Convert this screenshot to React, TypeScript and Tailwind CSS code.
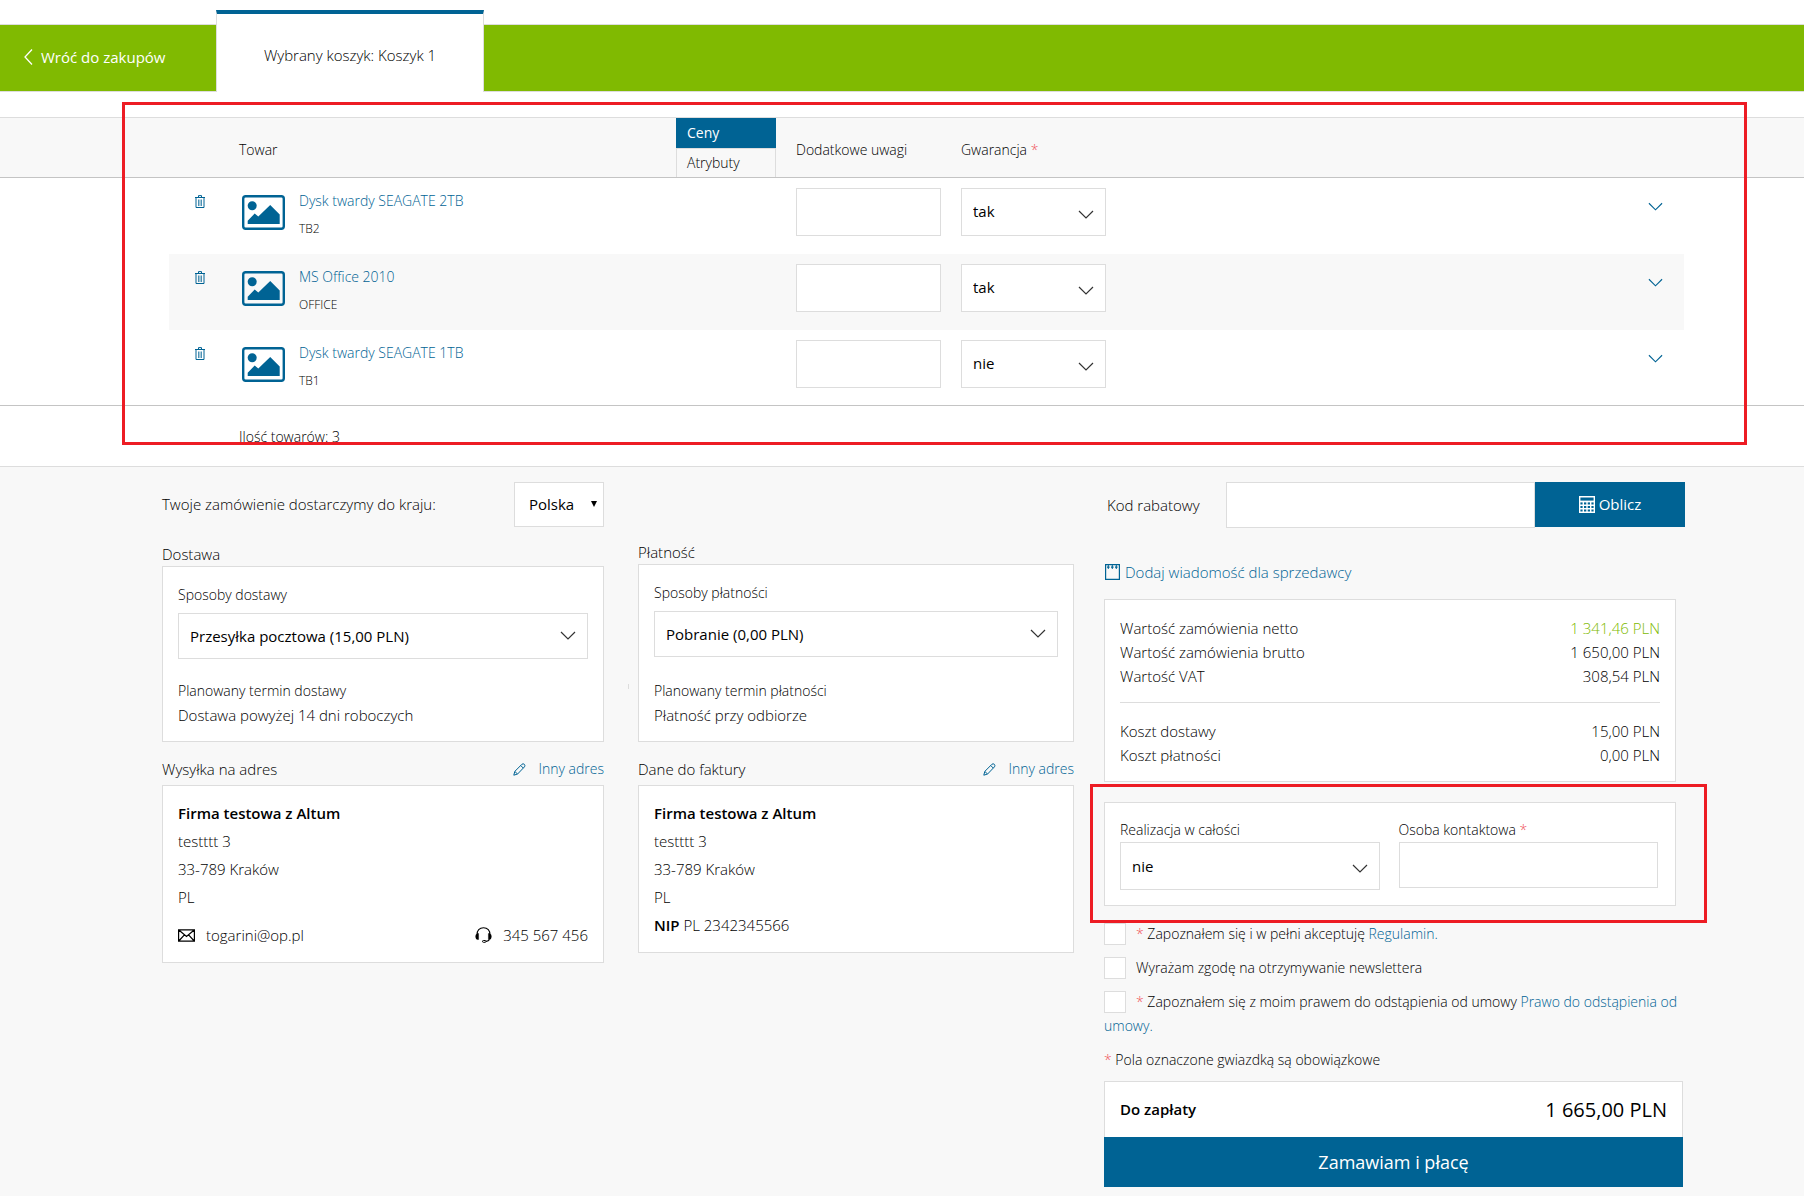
import React from "react";

type Product = {
  name: string;
  code: string;
  warranty: string;
};

const products: Product[] = [
  { name: "Dysk twardy SEAGATE 2TB", code: "TB2", warranty: "tak" },
  { name: "MS Office 2010", code: "OFFICE", warranty: "tak" },
  { name: "Dysk twardy SEAGATE 1TB", code: "TB1", warranty: "nie" },
];

function ChevronDown({ className }: { className?: string }) {
  return (
    <svg viewBox="0 0 16 10" className={className} fill="none" stroke="currentColor" strokeWidth="1.2" aria-hidden="true">
      <path d="M1 1l7 7 7-7" />
    </svg>
  );
}

function TrashIcon() {
  return (
    <svg width="10" height="13" viewBox="0 0 10 13" fill="none" stroke="currentColor" aria-hidden="true">
      <path d="M0 2.5h10M3.500 2V.6h3V2M1 2.500v10h8v-10" strokeWidth="1" />
      <path d="M3.500 4.500v6.500M5 4.500v6.500M6.500 4.500v6.500" strokeWidth="0.7" />
    </svg>
  );
}

function PictureIcon() {
  return (
    <svg width="43" height="35" viewBox="0 0 43 35" aria-hidden="true">
      <rect x="1.2" y="1.2" width="40.6" height="32.6" rx="2.5" fill="none" stroke="currentColor" strokeWidth="2.4" />
      <circle cx="10.2" cy="10.8" r="4.5" fill="currentColor" />
      <path d="M5.7 29v-3.2l7-7.4 3.6 3L28.2 10l9.5 9.6V29z" fill="currentColor" />
    </svg>
  );
}

function PencilIcon() {
  return (
    <svg width="13" height="13" viewBox="0 0 13 13" fill="none" stroke="currentColor" aria-hidden="true">
      <path d="M.8 12.2l1-3.800L8.900 1.300q1.300-1.100 2.400 0t.2 2.500L4.600 11zM7.800 2.600l2.500 2.500M2 8.600l2.400 2.300" />
    </svg>
  );
}

function MailIcon() {
  return (
    <svg width="17" height="13" viewBox="0 0 17 13" fill="none" stroke="currentColor" strokeWidth="1.2" aria-hidden="true">
      <path d="M.6.8h15.8v11.4H.6zM.8 1l7.7 6.4L16.2 1M.8 12l5.6-6.2M16.2 12l-5.6-6.2" />
    </svg>
  );
}

function HeadsetIcon() {
  return (
    <svg width="17" height="16" viewBox="0 0 17 16" fill="none" stroke="currentColor" aria-hidden="true">
      <path d="M2.2 7.5C1.8 3.5 4.5.7 8.5.7s6.700 2.800 6.300 6.800M14.500 12.500q-.8 1.700-3.500 1.900" strokeWidth="1.100" />
      <path d="M3.600 6.500v6H2.300Q.6 12 .6 9.500t1.700-3zM13.400 6.500v6h1.300q1.700-.5 1.700-3t-1.700-3z" fill="currentColor" strokeWidth="0.400" />
      <rect x="7.500" y="13.500" width="3.500" height="1.800" rx="0.900" />
    </svg>
  );
}

function CalculatorIcon() {
  return (
    <svg width="16" height="17" viewBox="0 0 16 17" fill="none" stroke="currentColor" aria-hidden="true">
      <path d="M.7.7h14.600v15.600H.7z" strokeWidth="1.400" />
      <path d="M.7 5.500h14.600" strokeWidth="1.800" />
      <path d="M1 9.300h14M1 12.800h14M4.300 6v10M8 6v10M11.700 6v10" strokeWidth="1.400" />
    </svg>
  );
}

function NoteIcon() {
  return (
    <svg width="15" height="16" viewBox="0 0 15 16" fill="none" stroke="currentColor" aria-hidden="true">
      <path d="M.6.600h13.800v14.800H.6z" strokeWidth="1.200" />
      <path d="M2 3.200h11" strokeWidth="1.200" strokeDasharray="2.600 1.400" />
      <path d="M3.300 1v4M7.300 1v4M11.300 1v4" strokeWidth="1" />
    </svg>
  );
}

type SelectBoxProps = {
  id: string;
  label?: string;
  options: string[];
  size?: "md" | "lg";
};

function SelectBox({ id, label, options, size = "md" }: SelectBoxProps) {
  return (
    <div className="relative">
      <select
        id={id}
        aria-label={label}
        className={`${size === "lg" ? "h-12" : "h-[46px]"} w-full appearance-none border border-[#ddd] bg-white pl-[11px] pr-10 text-[15px] font-normal text-black`}
      >
        {options.map((option) => (
          <option key={option}>{option}</option>
        ))}
      </select>
      <ChevronDown
        className={`${size === "lg" ? "top-[22px]" : "top-[18px]"} pointer-events-none absolute right-3 h-[10px] w-4 text-[#333]`}
      />
    </div>
  );
}

function Required() {
  return <span className="text-[#f0545a]">*</span>;
}

function SectionHeading({ title }: { title: string }) {
  return (
    <div className="flex h-[30px] items-center justify-between pb-[2px]">
      <h2 className="text-[15px]">{title}</h2>
      <a href="#" className="flex items-center gap-3 text-sm text-[#006394]">
        <PencilIcon />
        Inny adres
      </a>
    </div>
  );
}

function MethodCard(props: { id: string; label: string; option: string; termLabel: string; term: string; className: string }) {
  return (
    <div className={`flex flex-col border border-[#ddd] bg-white px-[15px] pb-[14px] pt-4 ${props.className}`}>
      <label htmlFor={props.id} className="mb-[6px] block text-sm leading-6">
        {props.label}
      </label>
      <SelectBox id={props.id} options={[props.option]} />
      <p className="mt-auto text-sm leading-6">{props.termLabel}</p>
      <p className="text-[15px] leading-6">{props.term}</p>
    </div>
  );
}

function AddressLines() {
  return (
    <>
      <p className="font-semibold">Firma testowa z Altum</p>
      <p>testttt 3</p>
      <p>33-789 Kraków</p>
      <p>PL</p>
    </>
  );
}

function SummaryRow({ label, value, highlight }: { label: string; value: string; highlight?: boolean }) {
  return (
    <div className="flex justify-between">
      <dt>{label}</dt>
      <dd className={highlight ? "text-[#80ba01]" : ""}>{value}</dd>
    </div>
  );
}

function Consent({ id, children }: { id: string; children: React.ReactNode }) {
  return (
    <div className="mb-[10px] leading-6">
      <input
        id={id}
        type="checkbox"
        className="my-px mr-[10px] h-[22px] w-[22px] appearance-none border border-[#ddd] bg-white align-top checked:bg-[#006394]"
      />
      <label htmlFor={id}>{children}</label>
    </div>
  );
}

export default function App() {
  return (
    <div className="bg-white font-['Open_Sans','Noto_Sans',sans-serif] font-[350] text-black">
      <header className="pt-[10px]">
        <nav className="flex h-[82px] items-end">
          <a
            href="#"
            className="flex h-[68px] w-[216px] items-center gap-2 border-y border-[#ddd] bg-[#80ba01] pb-[2px] pl-6 text-[15px] font-normal text-white"
          >
            <svg width="9" height="18" viewBox="0 0 9 18" fill="none" stroke="currentColor" strokeWidth="1.3" aria-hidden="true">
              <path d="M8 1.500L1 9l7 7.500" />
            </svg>
            Wróć do zakupów
          </a>
          <a
            href="#"
            className="flex h-[82px] w-[268px] items-center justify-center border-x border-t-4 border-x-[#ddd] border-t-[#006394] bg-white pt-1 text-[15px]"
          >
            Wybrany koszyk: Koszyk 1
          </a>
          <div className="h-[68px] flex-1 border-y border-[#ddd] bg-[#80ba01]" />
        </nav>
      </header>

      <section className="relative pb-[24px] pt-[25px]">
        <table className="w-full table-fixed border-collapse text-left text-sm">
          <colgroup>
            <col className="w-[169px]" />
            <col className="w-[70px]" />
            <col className="w-[437px]" />
            <col className="w-[120px]" />
            <col className="w-[165px]" />
            <col className="w-[145px]" />
            <col />
            <col className="w-[120px]" />
          </colgroup>
          <thead>
            <tr className="h-[60px] border-b border-t border-b-[#c4c4c4] border-t-[#ddd] bg-[#f8f8f8]">
              <td />
              <td />
              <th className="pt-1 font-[350]">Towar</th>
              <th className="p-0 align-top font-[350]">
                <div className="w-[100px]">
                  <button type="button" className="block h-[30px] w-full bg-[#006394] pl-[11px] text-left font-normal text-white">
                    Ceny
                  </button>
                  <button type="button" className="block h-[29px] w-full border-x border-t border-[#ddd] pl-[10px] text-left">
                    Atrybuty
                  </button>
                </div>
              </th>
              <th className="pt-1 font-[350]">Dodatkowe uwagi</th>
              <th className="pt-1 font-[350]">
                Gwarancja <Required />
              </th>
              <td />
              <td />
            </tr>
          </thead>
          <tbody className="border-b border-[#c4c4c4]">
            {products.map((product, index) => {
              const shade = index % 2 === 1 ? "bg-[#f8f8f8]" : "";
              return (
                <tr key={product.code} className="h-[76px] align-top">
                  <td />
                  <td className={`pl-[26px] pt-[17px] ${shade}`}>
                    <button type="button" aria-label="Usuń" className="block text-[#006394]">
                      <TrashIcon />
                    </button>
                  </td>
                  <td className={`pl-[3px] ${shade}`}>
                    <div className="flex gap-[14px]">
                      <div className="pt-[17px] text-[#006394]">
                        <PictureIcon />
                      </div>
                      <div className="pt-2">
                        <a href="#" className="block leading-[30px] text-[#006394]">
                          {product.name}
                        </a>
                        <p className="text-xs leading-[26px]">{product.code}</p>
                      </div>
                    </div>
                  </td>
                  <td className={shade} />
                  <td className={`pt-[10px] ${shade}`}>
                    <input
                      type="text"
                      aria-label={`Dodatkowe uwagi ${product.name}`}
                      className="block h-12 w-[145px] border border-[#ddd] bg-white px-3"
                    />
                  </td>
                  <td className={`pt-[10px] ${shade}`}>
                    <SelectBox
                      id={`warranty-${product.code}`}
                      label="Gwarancja"
                      options={[product.warranty, product.warranty === "tak" ? "nie" : "tak"]}
                      size="lg"
                    />
                  </td>
                  <td className={`pr-[21px] pt-[24px] ${shade}`}>
                    <button type="button" aria-label="Rozwiń" className="ml-auto block text-[#006394]">
                      <ChevronDown className="h-[10px] w-[15px]" />
                    </button>
                  </td>
                  <td />
                </tr>
              );
            })}
          </tbody>
        </table>
        <div className="h-9 overflow-hidden pl-[239px] pt-[19px]">
          <p className="text-sm leading-6">Ilość towarów: 3</p>
        </div>
        <div className="pointer-events-none absolute bottom-[21px] left-[122px] right-[57px] top-[10px] border-[3px] border-[#ed1c24]" />
      </section>

      <main className="grid grid-cols-[476fr_466fr_581fr] border-t border-[#ddd] bg-[#f8f8f8] pb-[9px] pl-[162px] pr-[119px] pt-[15px]">
        <div className="relative pr-[34px]">
          <span className="absolute right-[9px] top-[202px] h-[5px] w-px bg-[#ddd]" />
          <div className="flex items-center justify-between">
            <label htmlFor="country" className="text-[15px]">
              Twoje zamówienie dostarczymy do kraju:
            </label>
            <div className="relative">
              <select
                id="country"
                className="block h-[45px] w-[90px] appearance-none border border-[#ddd] bg-white pl-[14px] text-[15px] font-normal"
              >
                <option>Polska</option>
              </select>
              <svg width="6" height="6" viewBox="0 0 6 6" className="pointer-events-none absolute right-[7px] top-[19px]" aria-hidden="true">
                <path d="M0 0h6L3 6z" />
              </svg>
            </div>
          </div>
          <div className="flex h-[39px] items-end">
            <h2 className="text-[15px] leading-6">Dostawa</h2>
          </div>
          <MethodCard
            id="delivery"
            label="Sposoby dostawy"
            option="Przesyłka pocztowa (15,00 PLN)"
            termLabel="Planowany termin dostawy"
            term="Dostawa powyżej 14 dni roboczych"
            className="h-[176px]"
          />
          <div className="mt-[13px]">
            <SectionHeading title="Wysyłka na adres" />
            <div className="border border-[#ddd] bg-white px-[15px] py-[13px] text-[15px] leading-7">
              <AddressLines />
              <div className="mt-[10px] flex items-center justify-between">
                <span className="flex items-center gap-[11px]">
                  <MailIcon />
                  togarini@op.pl
                </span>
                <span className="flex items-center gap-[11px]">
                  <HeadsetIcon />
                  345 567 456
                </span>
              </div>
            </div>
          </div>
        </div>

        <div className="pr-[30px]">
          <div className="flex h-[82px] items-end">
            <h2 className="text-[15px] leading-6">Płatność</h2>
          </div>
          <MethodCard
            id="payment"
            label="Sposoby płatności"
            option="Pobranie (0,00 PLN)"
            termLabel="Planowany termin płatności"
            term="Płatność przy odbiorze"
            className="h-[178px]"
          />
          <div className="mt-[13px]">
            <SectionHeading title="Dane do faktury" />
            <div className="border border-[#ddd] bg-white px-[15px] py-[13px] text-[15px] leading-7">
              <AddressLines />
              <p>
                <span className="font-semibold">NIP</span> PL 2342345566
              </p>
            </div>
          </div>
        </div>

        <div>
          <form className="flex items-start">
            <label htmlFor="discount" className="w-[122px] pl-[3px] text-[15px] leading-[46px]">
              Kod rabatowy
            </label>
            <input id="discount" type="text" className="h-[46px] min-w-0 flex-1 border border-[#ddd] bg-white px-3" />
            <button type="button" className="flex h-[45px] w-[150px] items-center justify-center gap-1 bg-[#006394] text-[15px] font-normal text-white">
              <CalculatorIcon />
              Oblicz
            </button>
          </form>
          <a href="#" className="mt-8 flex items-center gap-[5px] pl-px text-[15px] leading-6 text-[#006394]">
            <NoteIcon />
            Dodaj wiadomość dla sprzedawcy
          </a>

          <div className="mr-[9px] mt-[15px] border border-[#ddd] bg-white px-[15px] pb-[14px] pt-4 text-[15px] leading-6">
            <dl>
              <SummaryRow label="Wartość zamówienia netto" value="1 341,46 PLN" highlight />
              <SummaryRow label="Wartość zamówienia brutto" value="1 650,00 PLN" />
              <SummaryRow label="Wartość VAT" value="308,54 PLN" />
            </dl>
            <hr className="mb-4 mt-[14px] border-[#ddd]" />
            <dl>
              <SummaryRow label="Koszt dostawy" value="15,00 PLN" />
              <SummaryRow label="Koszt płatności" value="0,00 PLN" />
            </dl>
          </div>

          <div className="relative mr-[9px] mt-5">
            <div className="grid grid-cols-2 gap-[19px] border border-[#ddd] bg-white pb-[15px] pl-[15px] pr-[17px] pt-[15px]">
              <div>
                <label htmlFor="complete" className="block text-sm leading-6">
                  Realizacja w całości
                </label>
                <SelectBox id="complete" options={["nie", "tak"]} size="lg" />
              </div>
              <div>
                <label htmlFor="contact" className="block text-sm leading-6">
                  Osoba kontaktowa <Required />
                </label>
                <input id="contact" type="text" className="block h-[46px] w-full border border-[#ddd] bg-white px-3" />
              </div>
            </div>
            <div className="pointer-events-none absolute -bottom-[17px] -left-[14px] -right-[31px] -top-[18px] border-[3px] border-[#ed1c24]" />
          </div>

          <div className="mt-4 text-sm">
            <Consent id="terms">
              <Required /> Zapoznałem się i w pełni akceptuję{" "}
              <a href="#" className="text-[#006394]">
                Regulamin.
              </a>
            </Consent>
            <Consent id="newsletter">Wyrażam zgodę na otrzymywanie newslettera</Consent>
            <Consent id="withdrawal">
              <Required /> Zapoznałem się z moim prawem do odstąpienia od umowy{" "}
              <a href="#" className="text-[#006394]">
                Prawo do odstąpienia od umowy.
              </a>
            </Consent>
            <p className="leading-6">
              <Required /> Pola oznaczone gwiazdką są obowiązkowe
            </p>
          </div>

          <div className="mr-[2px] mt-[9px]">
            <div className="flex h-14 items-center justify-between border border-b-0 border-[#ddd] bg-white px-[15px]">
              <span className="text-[15px] font-semibold">Do zapłaty</span>
              <span className="text-xl font-normal">1 665,00 PLN</span>
            </div>
            <button type="button" className="block h-[50px] w-full bg-[#006394] text-lg font-normal text-white">
              Zamawiam i płacę
            </button>
          </div>
        </div>
      </main>
    </div>
  );
}
